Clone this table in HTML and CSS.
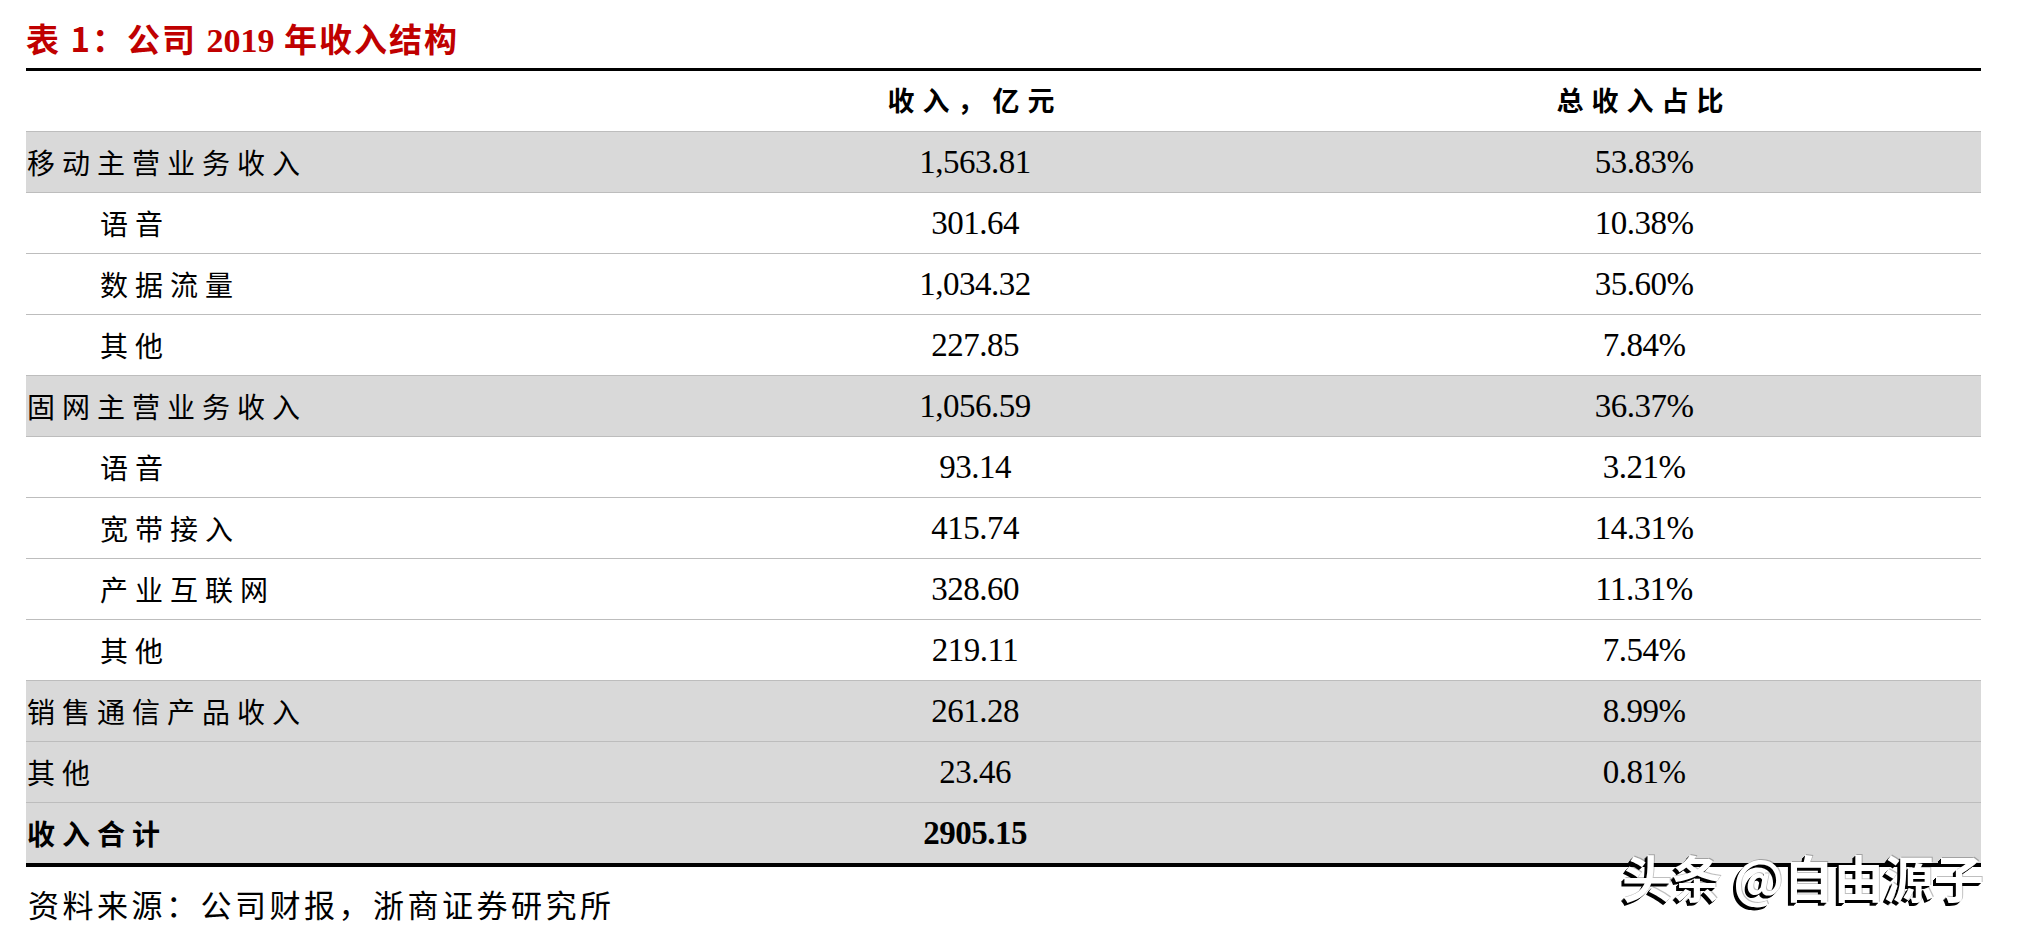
FILE: index.html
```html
<!DOCTYPE html>
<html lang="zh-CN">
<head>
<meta charset="utf-8">
<title>表 1：公司 2019 年收入结构</title>
<link rel="stylesheet" href="styles.css">
</head>
<body>
<div class="page">
  <h1 class="title">表 1：公司 <span class="num">2019</span> 年收入结构</h1>
  <div class="table">
    <div class="row head">
      <div class="cell label"></div>
      <div class="cell">收入，亿元</div>
      <div class="cell">总收入占比</div>
    </div>
    <div class="row shade">
      <div class="cell label">移动主营业务收入</div>
      <div class="cell num">1,563.81</div>
      <div class="cell num">53.83%</div>
    </div>
    <div class="row">
      <div class="cell label sub">语音</div>
      <div class="cell num">301.64</div>
      <div class="cell num">10.38%</div>
    </div>
    <div class="row">
      <div class="cell label sub">数据流量</div>
      <div class="cell num">1,034.32</div>
      <div class="cell num">35.60%</div>
    </div>
    <div class="row">
      <div class="cell label sub">其他</div>
      <div class="cell num">227.85</div>
      <div class="cell num">7.84%</div>
    </div>
    <div class="row shade">
      <div class="cell label">固网主营业务收入</div>
      <div class="cell num">1,056.59</div>
      <div class="cell num">36.37%</div>
    </div>
    <div class="row">
      <div class="cell label sub">语音</div>
      <div class="cell num">93.14</div>
      <div class="cell num">3.21%</div>
    </div>
    <div class="row">
      <div class="cell label sub">宽带接入</div>
      <div class="cell num">415.74</div>
      <div class="cell num">14.31%</div>
    </div>
    <div class="row">
      <div class="cell label sub">产业互联网</div>
      <div class="cell num">328.60</div>
      <div class="cell num">11.31%</div>
    </div>
    <div class="row">
      <div class="cell label sub">其他</div>
      <div class="cell num">219.11</div>
      <div class="cell num">7.54%</div>
    </div>
    <div class="row shade">
      <div class="cell label">销售通信产品收入</div>
      <div class="cell num">261.28</div>
      <div class="cell num">8.99%</div>
    </div>
    <div class="row shade">
      <div class="cell label">其他</div>
      <div class="cell num">23.46</div>
      <div class="cell num">0.81%</div>
    </div>
    <div class="row shade total">
      <div class="cell label">收入合计</div>
      <div class="cell num">2905.15</div>
      <div class="cell num"></div>
    </div>
  </div>
  <p class="source">资料来源：公司财报，浙商证券研究所</p>
  <div class="watermark">头条 @自由源子</div>
</div>
</body>
</html>
```

FILE: styles.css
```css
html, body {
  margin: 0;
  padding: 0;
  background: #ffffff;
}

.page {
  position: relative;
  width: 2021px;
  height: 937px;
  padding-left: 26px;
  box-sizing: border-box;
  font-family: "Noto Sans CJK SC", sans-serif;
  color: #000;
  overflow: hidden;
}

.title {
  margin: 0;
  height: 68px;
  box-sizing: border-box;
  padding-top: 8px;
  line-height: 60px;
  font-size: 33px;
  font-weight: 700;
  color: #c00000;
  font-family: "Noto Sans CJK SC", sans-serif;
  letter-spacing: 2px;
  word-spacing: 0;
}

.title .num {
  font-family: "Liberation Serif", serif;
  font-weight: 700;
  font-size: 34px;
  letter-spacing: 0;
}

.table {
  width: 1955px;
  border-top: 3px solid #000;
  border-bottom: 4px solid #000;
}

.row {
  display: grid;
  grid-template-columns: 617px 664px 674px;
  height: 61px;
  box-sizing: border-box;
  border-top: 1px solid #bdbdbd;
}

.row.head {
  height: 60px;
  border-top: none;
}

.row.shade {
  background: #d9d9d9;
}

.cell {
  display: flex;
  align-items: center;
  justify-content: center;
  font-size: 28px;
  letter-spacing: 6px;
}

.row.head .cell {
  font-weight: 700;
  font-size: 27px;
  letter-spacing: 8px;
  padding-bottom: 4px;
}

.cell.label {
  justify-content: flex-start;
  padding-left: 1px;
  letter-spacing: 7px;
  font-weight: 400;
}

.cell.sub {
  padding-left: 74px;
}

.cell.num {
  font-family: "Liberation Serif", serif;
  font-size: 33px;
  letter-spacing: -0.5px;
}

.row.total .cell {
  font-weight: 700;
}

.source {
  margin: 0;
  height: 66px;
  line-height: 74px;
  padding-left: 2px;
  font-size: 31px;
  font-weight: 400;
  letter-spacing: 3.5px;
}

.watermark {
  position: absolute;
  left: 1622px;
  top: 843px;
  font-family: "Noto Sans CJK SC", sans-serif;
  font-size: 50px;
  line-height: 66px;
  font-weight: 700;
  color: #ffffff;
  letter-spacing: 0;
  text-shadow: -3px 3px 0 #000, -2px 2px 0 #000, -1px 1px 0 #000, 1px -1px 0 rgba(0,0,0,0.25);
  white-space: nowrap;
}
```
